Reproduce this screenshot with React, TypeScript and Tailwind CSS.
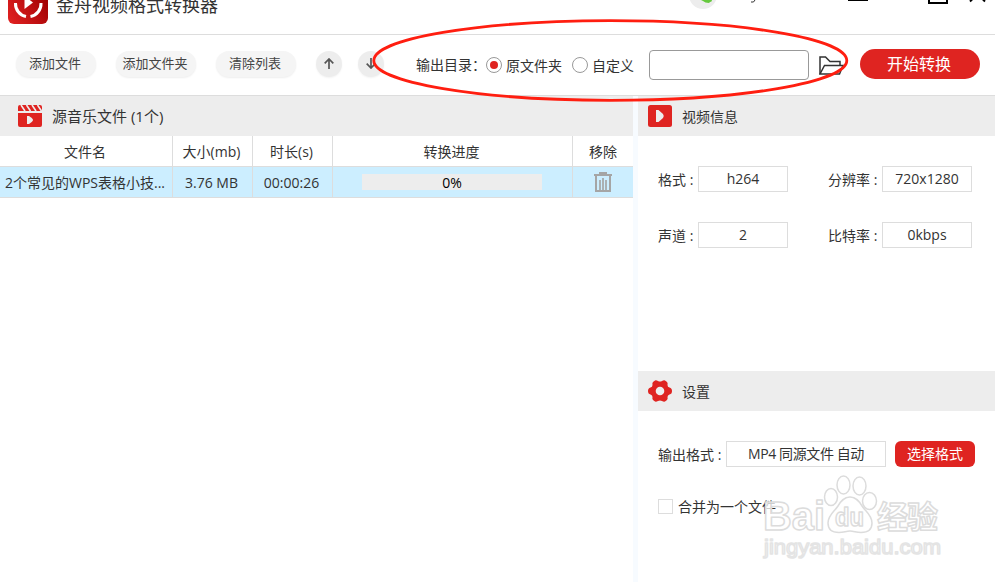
import React from 'react';

function Logo() {
    return (
        <svg width="40" height="40" viewBox="0 0 40 40" className="shrink-0">
            <defs>
                <linearGradient id="logo" x1="0" y1="1" x2="1" y2="0.4">
                    <stop offset="0" stopColor="#e32322" />
                    <stop offset="0.55" stopColor="#c01012" />
                    <stop offset="1" stopColor="#a00002" />
                </linearGradient>
            </defs>
            <rect width="40" height="40" rx="6" fill="url(#logo)" />
            <path d="M7.500 19a13 13 0 0 0 10.500 13.500M22.500 32.500A13 13 0 0 0 33 19" fill="none" stroke="#fff" strokeWidth="3" />
            <path d="M16.500 12v13L25 18.500z" fill="#fff" />
        </svg>
    );
}

function Clapper() {
    return (
        <svg width="24" height="22" viewBox="0 0 24 22">
            <path d="M0 8h24v12a2 2 0 0 1-2 2H2a2 2 0 0 1-2-2z" fill="#df2421" />
            <path d="M0 6V2q0-2 2-2h20q2 0 2 2v4z" fill="#df2421" />
            <path d="M3 0l4 6M8.500 0l4 6M14 0l4 6M19.500 0l4 6" stroke="#ededed" strokeWidth="1.600" />
            <path d="M9 11h2q4 2.500 4 4t-4 4H9z" fill="#ededed" />
        </svg>
    );
}

function PlayBadge() {
    return (
        <svg width="24" height="22" viewBox="0 0 24 22">
            <rect width="24" height="22" rx="2.500" fill="#df2421" />
            <path d="M8 5h2.500l4.500 4q1.500 2 0 4l-4.500 4H8z" fill="#ededed" />
        </svg>
    );
}

function Gear() {
    return (
        <svg width="24" height="22" viewBox="0 0 24 22">
            <path
                d="M7 .4Q8.500 0 10 1q2 1 4 0 1.500-1 3-.6l2 1.600q1 1 .5 3 0 2 2 2.500 2.500.5 2.500 3.500t-2.500 3.500q-2 .5-2 2.500.5 2-.5 3l-2 1.600q-1.500.4-3-.6-2-1-4 0-1.500 1-3 .6L5 20q-1-1-.5-3 0-2-2-2.500Q0 14 0 11t2.500-3.500q2-.5 2-2.500Q4 3 5 2z"
                fill="#df2421"
            />
            <circle cx="12" cy="11" r="4.300" fill="#ededed" />
        </svg>
    );
}

function Trash() {
    return (
        <svg width="18" height="20" viewBox="0 0 18 20" fill="none" stroke="#a5a5a5">
            <path d="M0 3h18" strokeWidth="2" />
            <path d="M5 1h8" strokeWidth="2" />
            <path d="M2 3v16h14V3" strokeWidth="2" />
            <path d="M6 8v10M9 6v12M12 8v10" strokeWidth="1.700" />
        </svg>
    );
}

function FolderOpen() {
    return (
        <svg width="25" height="19" viewBox="0 0 25 19" fill="none" stroke="#333" strokeWidth="1.500">
            <path d="M1 18V1h5.500l4.500 4.500h10V9.500" />
            <path d="M1 18L5.500 9.500H24L20.500 18z" />
        </svg>
    );
}

function Arrow({ down }: { down?: boolean }) {
    return (
        <button className="flex h-[26px] w-[26px] items-center justify-center rounded-full bg-[#ededed] shadow-[0_1px_2px_#0000000d]">
            <svg width="10" height="11" viewBox="0 0 10 11" fill="none" stroke="#555" strokeWidth="1.700" className={down ? 'rotate-180' : ''}>
                <path d="M5 11V1M.7 5.300L5 1l4.300 4.300" />
            </svg>
        </button>
    );
}

function Pill({ children }: { children: string }) {
    return (
        <button className="h-[26px] w-20 rounded-full bg-[#f5f5f5] pr-0.5 text-[13px] text-[#444] shadow-[0_1px_2px_#00000012]">
            {children}
        </button>
    );
}

function Radio({ label, checked }: { label: string; checked?: boolean }) {
    return (
        <label className="flex items-center gap-1">
            <span className="flex h-4 w-4 items-center justify-center rounded-full border border-[#999]">
                {checked && <span className="h-2 w-2 rounded-full bg-[#df2421]" />}
            </span>
            <span className="relative top-px">{label}</span>
        </label>
    );
}

function Field({ label, value }: { label: string; value: string }) {
    return (
        <div className="flex items-center">
            <span className="relative top-px shrink-0 whitespace-pre">{label} :</span>
            <div className="ml-auto h-[26px] w-[90px] border border-[#ddd] text-center leading-6">{value}</div>
        </div>
    );
}

function SectionHead({ icon, title }: { icon: React.ReactNode; title: string }) {
    return (
        <div className="flex h-10 items-center gap-2.5 bg-[#ededed] pl-2.5">
            {icon}
            <span className="relative top-px">{title}</span>
        </div>
    );
}

function Watermark() {
    return (
        <svg width="184" height="90" viewBox="0 0 184 90" className="absolute left-[760px] top-[472px]" fill="#fff" fillOpacity="0.75" stroke="#dcdcdc" strokeWidth="1.500" strokeLinejoin="round">
            <text x="3" y="58" fontFamily="Liberation Sans" fontWeight="700" fontSize="40" textLength="62" lengthAdjust="spacingAndGlyphs">Bai</text>
            <ellipse cx="71" cy="25" rx="6.500" ry="8.500" />
            <ellipse cx="83.500" cy="13" rx="6.500" ry="9" />
            <ellipse cx="99.500" cy="14" rx="6.500" ry="9" />
            <ellipse cx="109.500" cy="29" rx="7" ry="8.500" />
            <path d="M90 25c6 0 9 4 12 9s10 9 10 17-6 9.500-11 9.500-7-1.500-11-1.500-6 1.500-11 1.500-11-1.500-11-9.500 7-12 10-17 6-9 12-9z" />
            <text x="75" y="54" fontFamily="Liberation Sans" fontWeight="700" fontSize="25" textLength="29" lengthAdjust="spacingAndGlyphs">du</text>
            <text x="117" y="56" fontFamily="Noto Sans CJK SC" fontWeight="700" fontSize="31" textLength="61">经验</text>
            <text x="4" y="82" fontFamily="Liberation Sans" fontSize="21" textLength="177" lengthAdjust="spacingAndGlyphs" stroke="#e4e4e4">jingyan.baidu.com</text>
        </svg>
    );
}

export default function App() {
    return (
        <div className="relative flex h-[582px] w-[995px] flex-col overflow-hidden bg-white font-['Open_Sans','Noto_Sans_CJK_SC',sans-serif] text-sm text-[#333]">
            <header className="flex h-[35px] shrink-0 items-end border-b border-[#ddd] pl-2">
                <div className="mb-2.5 flex items-center">
                    <Logo />
                    <span className="relative top-[1px] ml-2 text-lg leading-6">金舟视频格式转换器</span>
                </div>
                <svg width="309" height="10" viewBox="0 0 309 10" className="mb-6 ml-auto">
                    <circle cx="17" cy="-5" r="14" fill="#ededed" />
                    <path d="M15 0h11q0 2-2 2l-1 1q-4 0-6-2z" fill="#65c93d" />
                    <path d="M69 0q-1 3-4 2" stroke="#333" fill="none" />
                    <path d="M162 .5h20" stroke="#000" strokeWidth="1" />
                    <path d="M243 0v3h18V0" stroke="#000" strokeWidth="2" fill="none" />
                    <path d="M284 1.500l3-3M299 1.500l-3-3" stroke="#000" strokeWidth="2" />
                </svg>
            </header>

            <div className="flex h-[61px] shrink-0 items-center border-b border-[#ddd] pl-4">
                <div className="mb-[3px] flex gap-5">
                    <Pill>添加文件</Pill>
                    <Pill>添加文件夹</Pill>
                    <Pill>清除列表</Pill>
                </div>
                <div className="mb-[3px] ml-5 flex gap-4">
                    <Arrow />
                    <Arrow down />
                </div>
                <span className="ml-8">输出目录：</span>
                <div className="flex gap-2.5">
                    <Radio label="原文件夹" checked />
                    <Radio label="自定义" />
                </div>
                <input className="ml-[15px] h-[30px] w-40 rounded border border-[#999]" />
                <div className="ml-2.5">
                    <FolderOpen />
                </div>
                <button className="mb-0.5 ml-4 h-[30px] w-[120px] rounded-full bg-[#df2421] pr-0.5 text-base text-white">开始转换</button>
            </div>

            <div className="flex flex-1">
                <main className="w-[633px]">
                    <div className="flex h-10 items-center gap-2.5 bg-[#ededed] pl-[18px]">
                        <Clapper />
                        <span className="pt-0.5 text-[15px]">源音乐文件 (1个)</span>
                    </div>
                    <div className="grid grid-cols-[173px_80px_80px_240px_60px] text-center">
                        {['文件名', '大小(mb)', '时长(s)', '转换进度'].map((name) => (
                            <div key={name} className="h-[31px] border-r border-b border-[#ddd] pr-0.5 leading-[31px]">
                                {name}
                            </div>
                        ))}
                        <div className="h-[31px] border-b border-[#ddd] leading-[31px]">移除</div>
                        {['2个常见的WPS表格小技...', '3.76 MB', '00:00:26'].map((value) => (
                            <div key={value} className="h-[31px] border-r border-b border-[#ddd] bg-[#cef] pr-0.5 leading-[31px] whitespace-nowrap">
                                {value}
                            </div>
                        ))}
                        <div className="flex h-[31px] items-center border-r border-b border-[#ddd] bg-[#cef] pl-[29px]">
                            <div className="h-4 w-[180px] bg-[#ededed] leading-[18px] text-black">0%</div>
                        </div>
                        <div className="flex h-[31px] items-center justify-center border-b border-[#ddd] bg-[#cef]">
                            <Trash />
                        </div>
                    </div>
                </main>

                <div className="w-[5px] bg-[#f7fbff]" />

                <aside className="flex-1">
                    <SectionHead icon={<PlayBadge />} title="视频信息" />
                    <div className="grid h-[235px] grid-cols-[130px_144px] content-start gap-x-10 gap-y-[30px] pt-[30px] pl-5">
                        <Field label="格式" value="h264" />
                        <Field label="分辨率" value="720x1280" />
                        <Field label="声道" value="2" />
                        <Field label="比特率" value="0kbps" />
                    </div>
                    <SectionHead icon={<Gear />} title="设置" />
                    <div className="flex items-center pt-[30px] pl-5">
                        <span className="relative top-px w-[68px]">输出格式 :</span>
                        <div className="h-[26px] w-40 border border-[#ddd] text-center leading-6 tracking-[-0.4px]">MP4 同源文件 自动</div>
                        <button className="ml-[9px] h-[26px] w-20 rounded-md bg-[#df2421] text-white">选择格式</button>
                    </div>
                    <label className="flex items-center gap-[5px] pt-[29px] pl-5">
                        <span className="h-[15px] w-[15px] border border-[#ddd]" />
                        <span className="relative top-px">合并为一个文件</span>
                    </label>
                </aside>
            </div>

            <Watermark />
            <svg width="480" height="84" viewBox="0 0 480 84" className="absolute left-[370px] top-[18px]">
                <ellipse cx="240.300" cy="42.500" rx="236.500" ry="39.800" fill="none" stroke="#ff1e10" strokeWidth="2.800" />
            </svg>
        </div>
    );
}
